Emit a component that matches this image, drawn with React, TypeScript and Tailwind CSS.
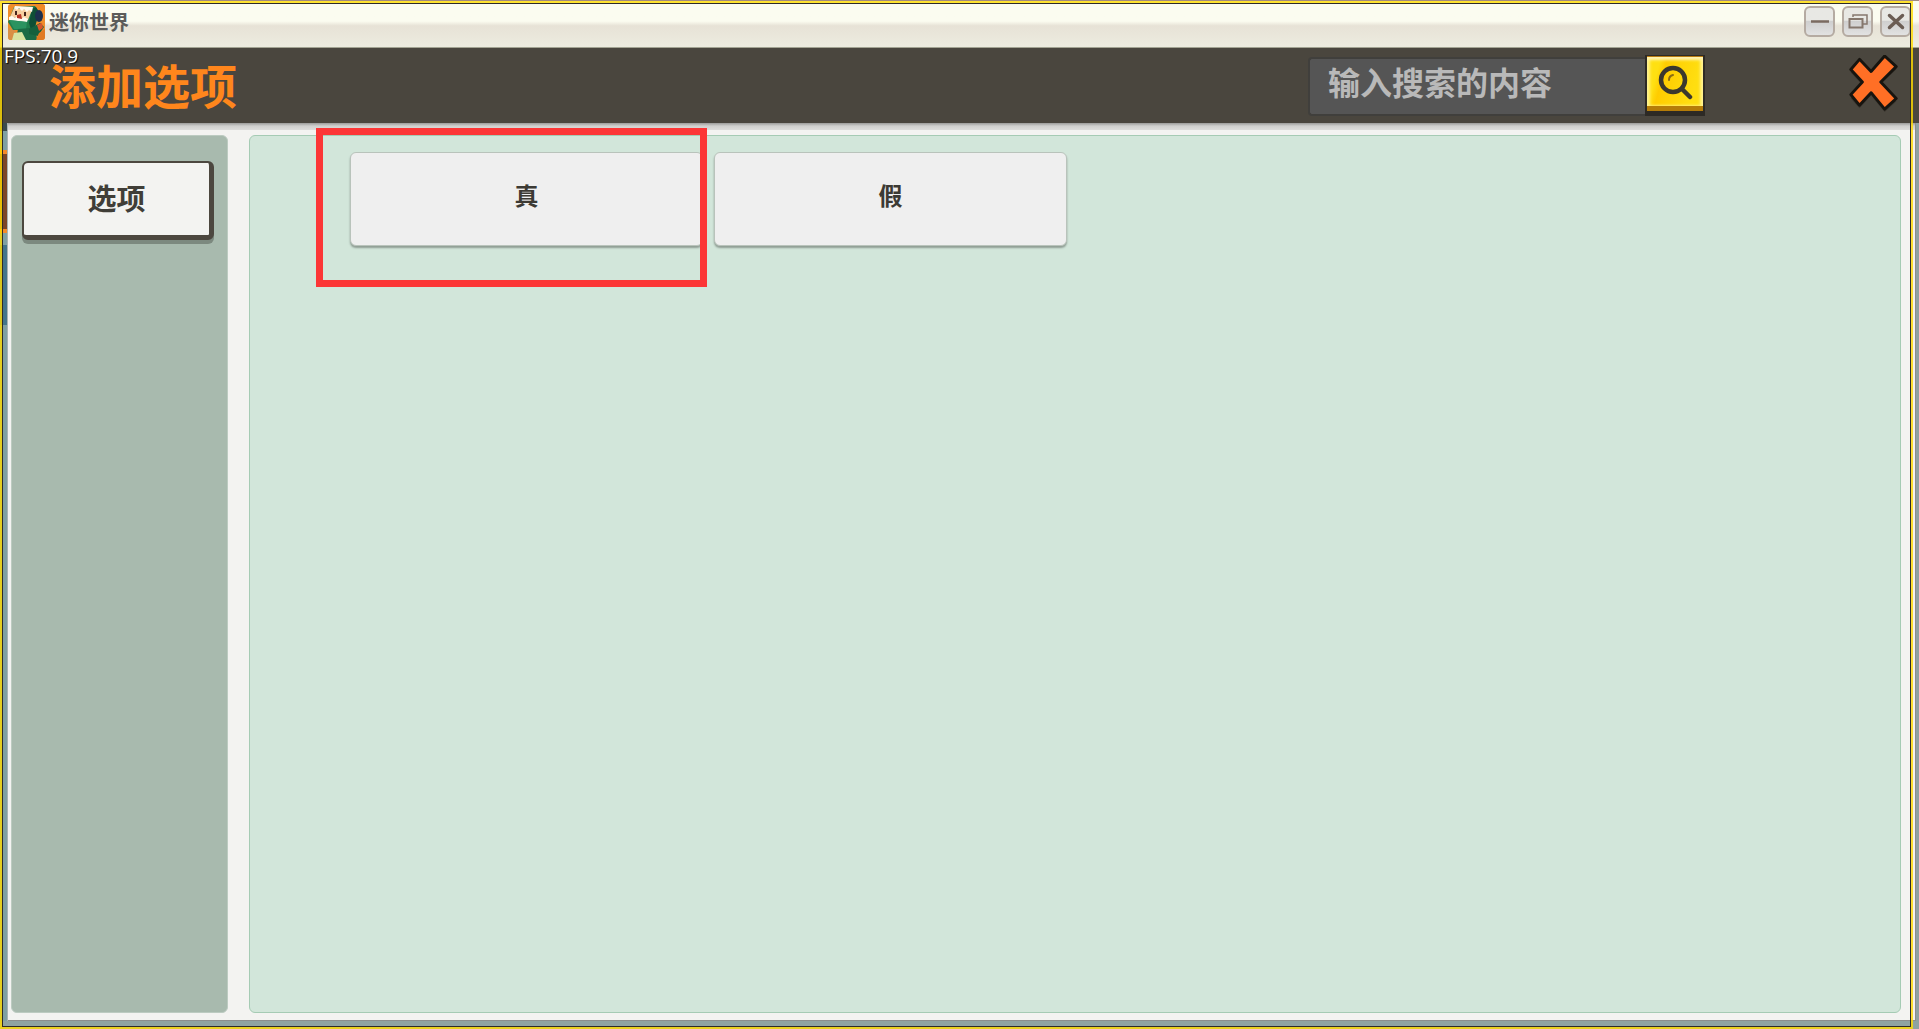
import React from "react";

const FONT =
  "font-['Noto_Sans_CJK_SC','Noto_Sans',sans-serif]";

const options = [
  { id: 1, label: "真", marked: true },
  { id: 2, label: "假", marked: false },
];

const GameLogo: React.FC = () => (
  <svg width="37" height="36" viewBox="0 0 37 36" aria-hidden="true">
    <defs>
      <clipPath id="logo-clip">
        <rect width="37" height="36" rx="3" />
      </clipPath>
    </defs>
    <g clipPath="url(#logo-clip)">
      <rect width="37" height="36" fill="#ef8d2a" />
      <path d="M27 0h10v9l-6-3z" fill="#f08a24" />
      <path d="M0 24h5l4 6-3 6H0z" fill="#d98f45" />
      <path d="M6 3L27 2l4 6-4 15-4 3H5L0 18z" fill="#1f7d4c" />
      <path d="M24 5l4-2 3 5-4 15-4 3-2-7z" fill="#0f4f36" />
      <path d="M6 4l18 2-4 10L2 13z" fill="#f7cfa0" />
      <path d="M7 2l18 1-1 5-3-2-2 2-3-3-2 2-3-3-2 2-3-2z" fill="#fff9ee" />
      <path d="M1 13l3-1 3 2 3-2 3 3 3-2 4 2-1 3-18-2z" fill="#fffaf0" />
      <path d="M1 16l18 2-1 7H6z" fill="#2b9360" />
      <path d="M7 7h2v4H7zM16 8h2v4h-2z" fill="#46251b" />
      <path d="M9 11l4-1 1 5-5-1z" fill="#ba3324" />
      <ellipse cx="31" cy="12" rx="4" ry="6" fill="#1c304d" />
      <path d="M10 25l12-1 6 4 1 8H8z" fill="#1b6b45" />
      <path d="M21 25l11-6 4 4-6 9-9-2z" fill="#15603d" />
      <path d="M6 29l8-1 4 8H4z" fill="#d9e3a0" />
      <path d="M29 21l5-2 1 5-4 3z" fill="#d8552a" />
      <path d="M31 29l6-4v11h-9z" fill="#e07a22" />
    </g>
  </svg>
);

const WindowButton: React.FC<{ label: string; children: React.ReactNode }> = ({
  label,
  children,
}) => (
  <button
    type="button"
    aria-label={label}
    className="flex items-center justify-center w-[31px] h-[31px] rounded-md border-2 border-[#b5aba2] bg-linear-to-b from-[#e8e8e4] from-45% via-[#cfcfcf] via-50% to-[#e2e2e2]"
  >
    {children}
  </button>
);

const TitleBar: React.FC = () => (
  <div className="flex items-start justify-between h-12 pt-1 pl-2 pr-2 border-b border-[#a3a493] bg-linear-to-b from-[#fbfcf0] from-45% via-[#e7e2d6] via-55% to-[#edece0]">
    <div className="flex items-center space-x-1">
      <GameLogo />
      <span className="text-xl leading-9 font-bold text-[#5c5c5a]">迷你世界</span>
    </div>
    <div className="flex pt-0.5 space-x-[7px]">
      <WindowButton label="最小化">
        <svg width="20" height="20" viewBox="0 0 20 20">
          <path d="M1 9.5h18" stroke="#7a6a60" strokeWidth="2.500" />
        </svg>
      </WindowButton>
      <WindowButton label="还原">
        <svg width="20" height="20" viewBox="0 0 20 20" fill="none" stroke="#85776d">
          <path d="M5 5V3h14v9h-4" strokeWidth="1.500" />
          <rect x="1.5" y="7" width="13" height="8.500" strokeWidth="2" />
        </svg>
      </WindowButton>
      <WindowButton label="关闭">
        <svg width="20" height="20" viewBox="0 0 20 20">
          <path
            d="M3.500 3.500l13 12M16.500 3.500l-13 12"
            stroke="#6b5d54"
            strokeWidth="3.500"
            strokeLinecap="round"
          />
        </svg>
      </WindowButton>
    </div>
  </div>
);

const SearchBox: React.FC = () => (
  <form className="flex items-start" onSubmit={(e) => e.preventDefault()}>
    <input
      type="text"
      aria-label="搜索"
      placeholder="输入搜索的内容"
      className="w-[337px] h-[59px] mt-0.5 pl-[18px] pb-3 rounded-l-sm border-2 border-r-0 border-[#403f3c] bg-[#555555] text-[32px] font-bold text-[#b9b9b9] placeholder:text-[#b9b9b9] outline-none"
    />
    <button
      type="submit"
      aria-label="搜索"
      className="w-[60px] h-[61px] px-0.5 pt-px pb-[5px] bg-[#2d2a25]"
    >
      <span className="flex items-center justify-center w-full h-full border-t border-b-[5px] border-t-[#b87a10] border-b-[#b57c08] bg-linear-105 from-[#ffe012] from-20% via-[#ffcc00] via-30% to-[#ffde10] to-80% shadow-[inset_0_3px_3px_#fff2b0,inset_3px_0_3px_#fff080,inset_-3px_0_3px_#fff080]">
        <svg width="36" height="36" viewBox="0 0 36 36" fill="none" strokeLinecap="round">
          <circle cx="16" cy="16" r="12" stroke="#3b382e" strokeWidth="4.500" />
          <path d="M25 25l8 8" stroke="#3b382e" strokeWidth="4.500" />
          <path d="M12 16q0-4 4-5" stroke="#8a6d12" strokeWidth="2" />
        </svg>
      </span>
    </button>
  </form>
);

const Header: React.FC = () => (
  <header className="flex items-start h-[75px] pl-[49px] pr-5 bg-[#4a463e]">
    <h1 className="pt-3 text-[47px] leading-none font-bold text-[#ff861c]">添加选项</h1>
    <div className="flex items-start ml-auto pt-[7px] space-x-36">
      <SearchBox />
      <button type="button" aria-label="关闭页面">
        <svg width="50" height="58" viewBox="0 0 50 60">
          <path
            d="M10 8l12 12 14-15 12 10-17 16 17 17-12 11-14-17-12 13-9-10 12-14-12-13z"
            fill="#2b2822"
            opacity="0.5"
          />
          <path
            d="M10 4.500l12 12.500 14-16 12 11-16 16 16 17-12 11-14-17-12 13-9-11 12-13-12-13z"
            fill="#ff6f25"
            stroke="#17140f"
            strokeWidth="3"
            strokeLinejoin="round"
          />
        </svg>
      </button>
    </div>
  </header>
);

// Sliver of the game scene that shows beside the panel
const SceneEdge: React.FC = () => (
  <div className="flex flex-col w-2 border-r border-[#a9b3b3] bg-[#7fa0a2]">
    <div className="h-2 bg-[#3a4a4c]" />
    <div className="h-[83px] mt-[19px] border-y-4 border-[#f58a2a] bg-[#7c4527]" />
    <div className="h-20 mt-3 bg-[#43758a]" />
  </div>
);

const App: React.FC = () => {
  return (
    <div className={`relative flex flex-col min-h-screen bg-[#8fa3a1] ${FONT}`}>
      <TitleBar />
      <Header />
      <div className="flex grow pb-2 pr-[3px]">
        <SceneEdge />
        <div className="flex grow border-b border-r border-[#8b8d8b] bg-[#f3f3f1]">
          <div className="flex grow pl-[3px] pr-[14px] pt-3 pb-[7px] bg-[linear-gradient(to_bottom,#9b9b99_0,#d0d0ce_3px,#dededc_7px,transparent_7px)]">
            <nav className="w-[217px] px-2.5 pt-[25px] rounded-md border border-[#bccbc1] bg-[#a8baae]">
              <button
                type="button"
                className="w-[192px] h-[79px] pb-1 rounded-md border-2 border-r-[5px] border-b-[5px] border-[#4c473f] bg-[#f3f3f1] shadow-[0_4px_0_#7c897f] text-[29px] leading-none font-bold text-[#403e38]"
              >
                选项
              </button>
            </nav>
            <main className="grow ml-[21px] pl-[100px] pt-4 rounded-md border border-[#a5cbb4] bg-[#d2e6da]">
              <div className="flex flex-wrap gap-[11px]">
                {options.map((option) => (
                  <div key={option.id} className="relative">
                    <button
                      type="button"
                      className="block w-[353px] h-[94px] pb-2 rounded-md border border-[#b9c3bb] bg-[#efefef] shadow-[0_2px_2px_#8f9d94] text-2xl font-bold text-[#3c3a34]"
                    >
                      {option.label}
                    </button>
                    {option.marked && (
                      <div className="absolute -left-[34px] -right-1 -top-6 -bottom-[41px] border-[7px] border-[#fc3636] pointer-events-none" />
                    )}
                  </div>
                ))}
              </div>
            </main>
          </div>
        </div>
      </div>

      <span className="absolute left-1 top-[46px] text-[19px] leading-5 font-medium text-white [text-shadow:1px_1px_1px_#000] font-['Open_Sans',sans-serif]">
        FPS:70.9
      </span>

      {/* selection frame */}
      <div className="absolute top-px left-0 right-1.5 bottom-0 border-2 border-[#ffdb00]/80 pointer-events-none">
        <div className="h-full border border-[#2d2a2a]" />
      </div>
      <div className="absolute top-0 inset-x-0 h-px bg-[#a08a80]" />
    </div>
  );
};

export default App;
